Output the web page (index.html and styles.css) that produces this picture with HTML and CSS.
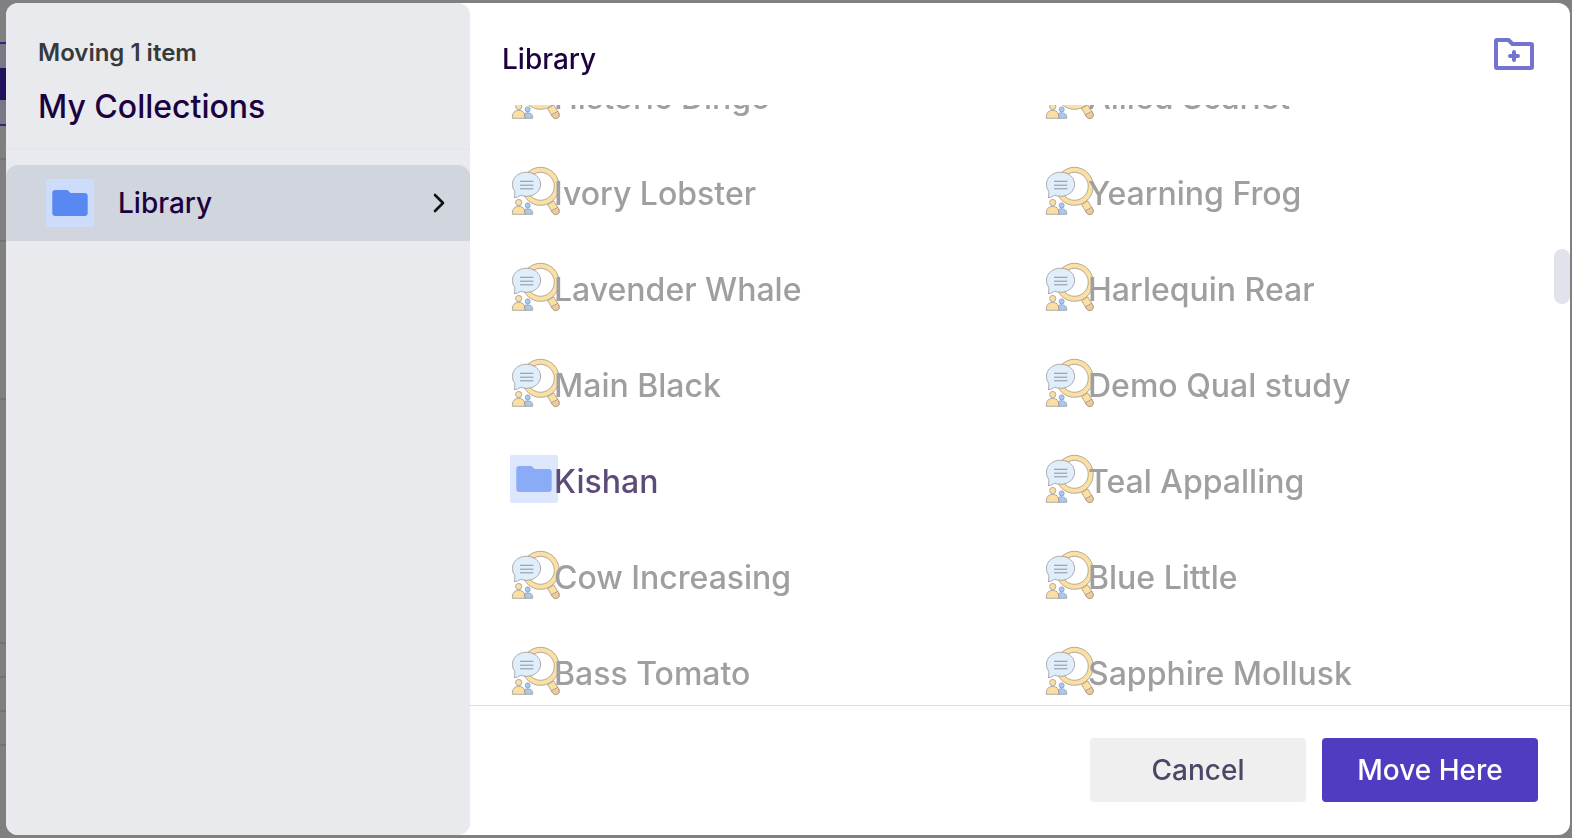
FILE: index.html
```
<!DOCTYPE html>
<html lang="en">
<head>
  <meta charset="UTF-8" />
  <meta name="viewport" content="width=device-width, initial-scale=1" />
  <title>Move to collection</title>
  <link rel="stylesheet" href="styles.css">
</head>
<body>
  <!-- Shared icons -->
  <svg class="sprite" aria-hidden="true">
    <symbol id="folder" viewBox="0 0 48 48">
      <rect class="folder-tile" width="48" height="48" rx="2"/>
      <path class="folder-shape" d="M9.5 11H20.5Q21.700 11 22.500 12L24.500 14H38.500Q41.700 14 41.700 17V34Q41.700 37 38.500 37H9.500Q6.300 37 6.300 34V14Q6.300 11 9.500 11Z"/>
    </symbol>
    <symbol id="study" viewBox="0 1 48 48" overflow="visible">
      <g stroke="#8f8d8a" stroke-width=".7" stroke-linejoin="round">
        <path fill="#fbe0a2" d="M37.500 38.500L43.800 34.800L49 43.500Q50 46.800 47.300 48.300Q44.300 49.500 42.500 46.800Z"/>
        <path fill="#f5c896" d="M41.300 44.700L47.800 41.300L49 43.500Q50 46.800 47.300 48.300Q44.300 49.500 42.500 46.800Z"/>
        <path fill="#fbe0a2" fill-rule="evenodd" d="M30.500 1.300a18.700 19 0 1 0 .01 0ZM30.500 6.300a13.800 14 0 1 1-.01 0Z"/>
        <path fill="#e0edfb" d="M16.500 6.200C24.500 6.200 30.600 11.500 30.600 18.300S24.500 30.300 16.500 30.300Q13.500 30.300 10.500 29.200Q7.500 31.600 4.300 31.700Q5 29.500 4.800 25.500Q2.400 22.500 2.400 18.300C2.400 11.500 8.500 6.200 16.500 6.200Z"/>
        <circle fill="#fbe0a2" cx="8.700" cy="36.500" r="3.100"/>
        <path fill="#fbe0a2" d="M2.400 48.300V46Q3 40.500 8.700 40.300Q14.400 40.500 15 46V48.300Z"/>
        <circle fill="#a4cafa" cx="17.700" cy="39.400" r="2.500"/>
        <path fill="#a4cafa" d="M15 48.300V46L14.200 44Q15.500 42.700 17.700 42.700Q22.300 43 22.700 47V48.300Z"/>
      </g>
      <path fill="none" stroke="#858992" stroke-width=".9" d="M10 15.300H23.400M10 19.200H23.400M10 22.800H23.400"/>
    </symbol>
  </svg>

  <!-- Page behind the dialog -->
  <div class="page" aria-hidden="true">
    <div class="page-toolbar"><div class="page-button"></div></div>
    <div class="page-row"></div>
    <div class="page-row page-row-md"></div>
    <div class="page-row page-row-lg"></div>
    <div class="page-row page-row-xl"></div>
    <div class="page-row"></div>
    <div class="page-row"></div>
    <div class="page-row"></div>
  </div>

  <!-- Move dialog -->
  <div class="dialog" role="dialog" aria-modal="true" aria-label="Move item">
    <aside class="sidebar">
      <div class="sidebar-header">
        <p class="moving">Moving 1 item</p>
        <h1>My Collections</h1>
      </div>
      <button type="button" class="collection">
        <svg class="icon" aria-hidden="true"><use href="#folder"/></svg>
        <span>Library</span>
        <svg class="chevron" viewBox="0 0 16 24" aria-hidden="true"><path d="M5 4l8 8-8 8"/></svg>
      </button>
    </aside>

    <main class="content">
      <header class="content-header">
        <h2>Library</h2>
        <button type="button" class="new-folder" aria-label="New folder">
          <svg viewBox="0 0 48 48" aria-hidden="true">
            <path d="M7 10H18.500L22.500 14H41Q42 14 42 15V37Q42 38 41 38H7Q6 38 6 37V11Q6 10 7 10Z"/>
            <path d="M24 22V30M20 26H28"/>
          </svg>
        </button>
      </header>

      <div class="list-area">
        <ul class="items">
          <li><button type="button" class="item" disabled><svg class="icon"><use href="#study"/></svg><span>Historic Dingo</span></button></li>
          <li><button type="button" class="item" disabled><svg class="icon"><use href="#study"/></svg><span>Allied Scarlet</span></button></li>
          <li><button type="button" class="item" disabled><svg class="icon"><use href="#study"/></svg><span>Ivory Lobster</span></button></li>
          <li><button type="button" class="item" disabled><svg class="icon"><use href="#study"/></svg><span>Yearning Frog</span></button></li>
          <li><button type="button" class="item" disabled><svg class="icon"><use href="#study"/></svg><span>Lavender Whale</span></button></li>
          <li><button type="button" class="item" disabled><svg class="icon"><use href="#study"/></svg><span>Harlequin Rear</span></button></li>
          <li><button type="button" class="item" disabled><svg class="icon"><use href="#study"/></svg><span>Main Black</span></button></li>
          <li><button type="button" class="item" disabled><svg class="icon"><use href="#study"/></svg><span>Demo Qual study</span></button></li>
          <li><button type="button" class="item item-folder"><svg class="icon"><use href="#folder"/></svg><span>Kishan</span></button></li>
          <li><button type="button" class="item" disabled><svg class="icon"><use href="#study"/></svg><span>Teal Appalling</span></button></li>
          <li><button type="button" class="item" disabled><svg class="icon"><use href="#study"/></svg><span>Cow Increasing</span></button></li>
          <li><button type="button" class="item" disabled><svg class="icon"><use href="#study"/></svg><span>Blue Little</span></button></li>
          <li><button type="button" class="item" disabled><svg class="icon"><use href="#study"/></svg><span>Bass Tomato</span></button></li>
          <li><button type="button" class="item" disabled><svg class="icon"><use href="#study"/></svg><span>Sapphire Mollusk</span></button></li>
        </ul>
        <div class="scroll-thumb"></div>
      </div>

      <footer class="actions">
        <button type="button" class="btn btn-cancel">Cancel</button>
        <button type="button" class="btn btn-primary">Move Here</button>
      </footer>
    </main>
  </div>
</body>
</html>
```
FILE: styles.css
```
:root {
  --ink: #1b0140;
  --primary: #4f3cc1;
  --muted: #9f9f9f;
  --sidebar-bg: #e9eaee;
  --active-bg: #d1d5de;
}

* {
  box-sizing: border-box;
}

body {
  margin: 0;
  height: 100vh;
  overflow: hidden;
  background: #808080;
  color: var(--ink);
  font-family: Inter, sans-serif;
  font-weight: 500;
}

h1, h2, p, ul {
  margin: 0;
  padding: 0;
  font-weight: 500;
}

button {
  border: 0;
  padding: 0;
  background: none;
  color: inherit;
  font: inherit;
  cursor: pointer;
}

.sprite {
  position: absolute;
  width: 0;
  height: 0;
}

/* Dimmed page behind the dialog */
.page {
  width: 50%;
  padding-top: 42px;
}

.page-toolbar {
  height: 84px;
  padding: 24px 0;
  border-top: 2px solid #35257a;
  border-bottom: 2px solid #35257a;
  background: #7b7886;
}

.page-button {
  width: 48px;
  height: 32px;
  background: #20125f;
}

.page-row {
  height: 34px;
  border-bottom: 2px solid #747474;
}

.page-row-md { height: 82px; }
.page-row-lg { height: 158px; }
.page-row-xl { height: 244px; }

/* Dialog */
.dialog {
  position: fixed;
  inset: 3px 2px 3px 6px;
  display: flex;
  border-radius: 12px;
  overflow: hidden;
  background: #fff;
}

/* Sidebar */
.sidebar {
  flex: 0 0 464px;
  border-radius: 12px;
  background: var(--sidebar-bg);
}

.sidebar-header {
  padding: 32px 32px 18px;
  margin-bottom: 15px;
  border-bottom: 2px solid #e5e6ef;
}

.moving {
  color: #373a3a;
  font-size: 24px;
  font-weight: 600;
  line-height: 36px;
}

h1 {
  margin-top: 12px;
  font-size: 32px;
  line-height: 47px;
}

.collection {
  display: flex;
  align-items: center;
  gap: 24px;
  width: 100%;
  height: 76px;
  padding: 0 24px 0 40px;
  border-radius: 12px 12px 0 0;
  background: var(--active-bg);
  font-size: 28px;
  text-align: left;
}

.icon {
  flex: none;
  width: 48px;
  height: 48px;
  overflow: visible;
}

.folder-tile { fill: #cddcfb; }
.folder-shape { fill: #5988f2; }

.chevron {
  width: 16px;
  height: 24px;
  margin-left: auto;
  fill: none;
  stroke: #111;
  stroke-width: 2.6;
  stroke-linecap: round;
  stroke-linejoin: round;
}

/* Main column */
.content {
  flex: 1;
  min-width: 0;
  display: flex;
  flex-direction: column;
}

.content-header {
  display: flex;
  justify-content: space-between;
  height: 102px;
  padding: 27px 32px;
}

h2 {
  font-size: 28px;
  line-height: 58px;
}

.new-folder,
.new-folder svg {
  display: block;
  width: 48px;
  height: 48px;
}

.new-folder svg {
  fill: none;
  stroke: #7373d0;
  stroke-width: 4;
  stroke-linecap: round;
  stroke-linejoin: round;
}

.list-area {
  position: relative;
  flex: 1;
  min-height: 0;
  overflow: hidden;
}

/* List is scrolled part of the way into its first row */
.items {
  display: grid;
  grid-template-columns: 1fr 1fr;
  margin-top: -56px;
  padding-left: 32px;
  list-style: none;
}

.item {
  display: flex;
  align-items: center;
  width: 100%;
  height: 96px;
  padding: 0 8px;
  color: var(--muted);
  font-size: 32px;
  text-align: left;
}

.item .icon {
  margin: 0 -4px 4px 0;
}

.item span {
  position: relative;
}

.item-folder {
  color: #5d4c79;
}

.item-folder .icon {
  opacity: 0.7;
}

.scroll-thumb {
  position: absolute;
  top: 24%;
  right: 0;
  width: 16px;
  height: 55px;
  border-radius: 8px;
  background: #e0e2ec;
}

/* Footer */
.actions {
  display: flex;
  justify-content: flex-end;
  gap: 16px;
  padding: 32px 32px 33px;
  border-top: 1px solid #dcdcdf;
}

.btn {
  width: 216px;
  height: 64px;
  border-radius: 4px;
  font-size: 28px;
}

.btn-cancel {
  background: #efefef;
  color: #4c4768;
}

.btn-primary {
  background: var(--primary);
  color: #fff;
}
```
